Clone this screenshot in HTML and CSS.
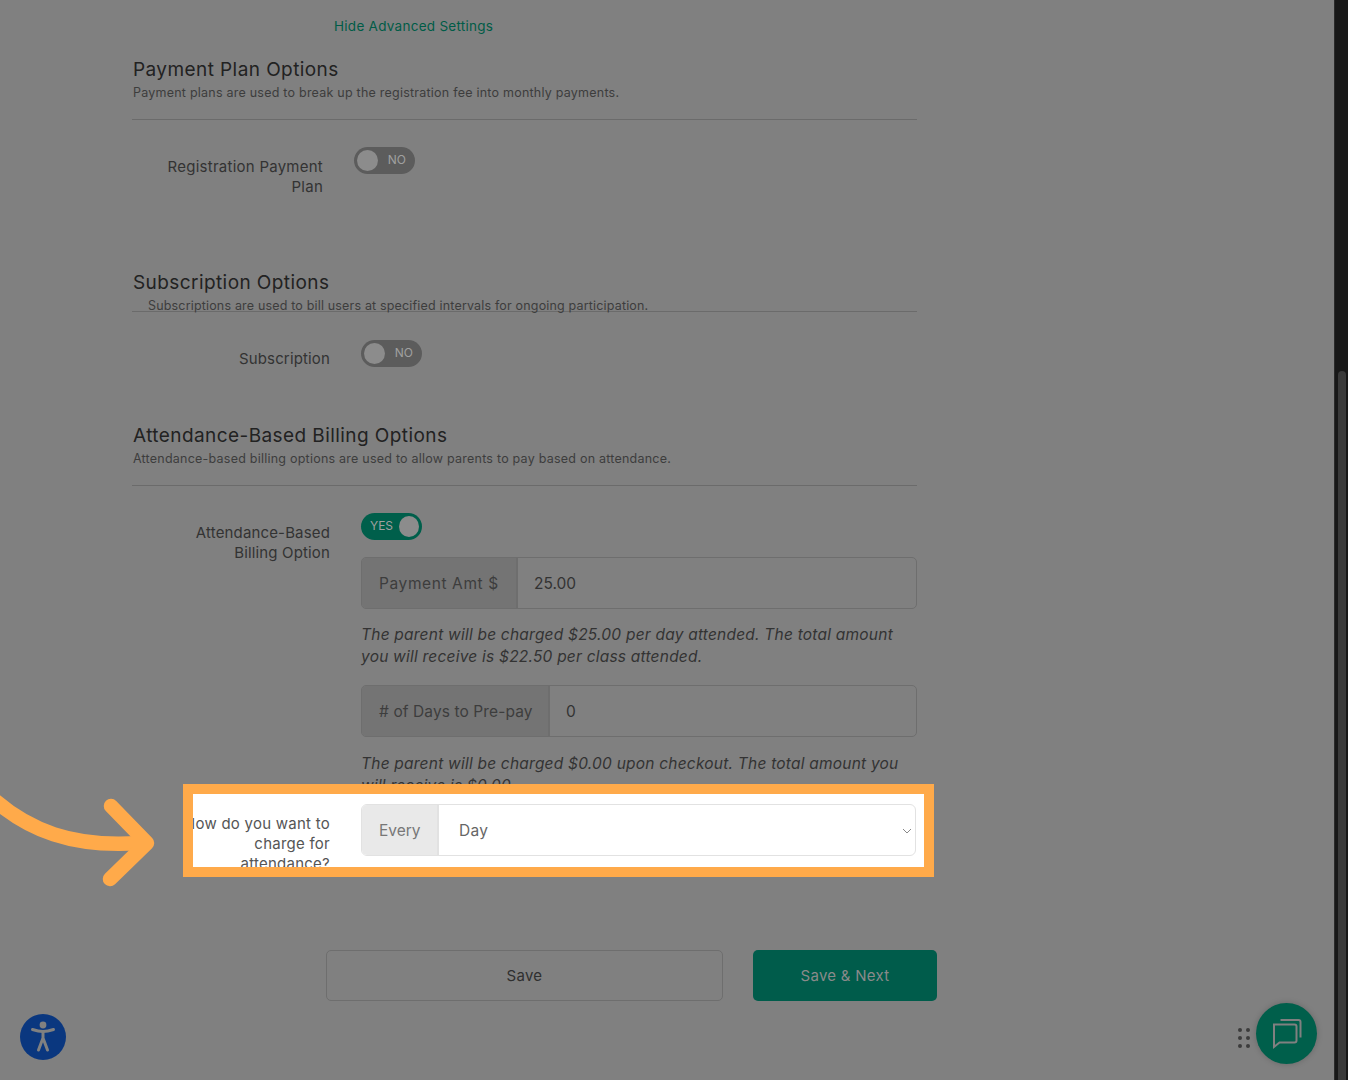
FILE: index.html
```html
<!DOCTYPE html>
<html lang="en">
<head>
    <meta charset="UTF-8">
    <meta name="viewport" content="width=device-width, initial-scale=1.0">
    <title>Registration Settings</title>
    <link rel="stylesheet" href="styles.css">
</head>
<body>
    <div class="screen">
        <main class="page">
            <a class="advanced-link" href="#">Hide Advanced Settings</a>

            <section class="first-section">
                <div class="section-head">
                    <h3>Payment Plan Options</h3>
                    <p class="section-desc">Payment plans are used to break up the registration fee into monthly payments.</p>
                </div>
                <div class="row row-shifted">
                    <label class="row-label">Registration Payment Plan</label>
                    <div class="row-control">
                        <span class="toggle"><span class="knob"></span><span class="toggle-text">NO</span></span>
                    </div>
                </div>
            </section>

            <section class="subscription-section">
                <div class="section-head section-head-tight">
                    <h3>Subscription Options</h3>
                    <p class="section-desc section-desc-indent">Subscriptions are used to bill users at specified intervals for ongoing participation.</p>
                </div>
                <div class="row row-subscription">
                    <label class="row-label">Subscription</label>
                    <div class="row-control">
                        <span class="toggle"><span class="knob"></span><span class="toggle-text">NO</span></span>
                    </div>
                </div>
            </section>

            <section class="attendance-section">
                <div class="section-head">
                    <h3>Attendance-Based Billing Options</h3>
                    <p class="section-desc">Attendance-based billing options are used to allow parents to pay based on attendance.</p>
                </div>
                <div class="row row-attendance">
                    <label class="row-label">Attendance-Based Billing Option</label>
                    <div class="row-control">
                        <span class="toggle toggle-on"><span class="toggle-text">YES</span><span class="knob"></span></span>
                        <div class="input-group">
                            <span class="addon">Payment Amt $</span>
                            <span class="input-value">25.00</span>
                        </div>
                        <p class="hint">The parent will be charged $25.00 per day attended. The total amount you will receive is $22.50 per class attended.</p>
                        <div class="input-group input-group-days">
                            <span class="addon"># of Days to Pre-pay</span>
                            <span class="input-value">0</span>
                        </div>
                        <p class="hint hint-days">The parent will be charged $0.00 upon checkout. The total amount you will receive is $0.00</p>
                    </div>
                </div>
            </section>

            <div class="actions">
                <button class="btn btn-save">Save</button>
                <button class="btn btn-next">Save &amp; Next</button>
            </div>

            <!-- tutorial callout, sits over the form -->
            <svg class="callout-arrow" width="160" height="100" viewBox="0 0 160 100">
                <path d="M-8 8 C 28 40, 72 58, 140 53" />
                <path d="M111 16 L147 53 L110 89" />
            </svg>
            <div class="spotlight">
                <div class="row row-spotlight">
                    <label class="row-label">How do you want to charge for attendance?</label>
                    <div class="row-control">
                        <div class="input-group input-group-light">
                            <span class="addon">Every</span>
                            <span class="input-value">Day</span>
                            <svg class="chevron" width="10" height="6" viewBox="0 0 10 6"><path d="M1 1 L5 5 L9 1" /></svg>
                        </div>
                    </div>
                </div>
            </div>

            <div class="a11y-btn">
                <svg width="46" height="46" viewBox="0 0 46 46">
                    <circle cx="23" cy="11" r="3.4" />
                    <path d="M12.5 15.5 C 17 17, 20 17.5, 23 17.5 C 26 17.5, 29 17, 33.5 15.5" />
                    <path d="M23 17.5 V 25 M23 24 L 18.5 36 M23 24 L 27.5 36" />
                </svg>
            </div>

            <div class="chat-handle">
                <i></i><i></i><i></i><i></i><i></i><i></i>
            </div>
            <div class="chat-btn">
                <svg width="61" height="61" viewBox="0 0 61 61">
                    <path d="M18 21.500 H38.500 A2 2 0 0 1 40.500 23.500 V37.500 A2 2 0 0 1 38.500 39.500 H23.500 L18 44 Z" />
                    <path d="M24.500 17 H42.500 A2 2 0 0 1 44.500 19 V34.500" />
                </svg>
            </div>
        </main>
        <div class="scrollbar"><div class="scroll-thumb"></div></div>
    </div>
</body>
</html>
```

FILE: styles.css
```css
* {
    box-sizing: border-box;
}
body {
    margin: 0;
    font-family: Inter, "Liberation Sans", sans-serif;
    background-color: #808080;
    color: #333;
}
.screen {
    display: flex;
    height: 1080px;
    overflow: hidden;
}
.page {
    position: relative;
    flex: 1;
    padding: 16px 0 0 132px;
}
.scrollbar {
    width: 14px;
    background: #181818;
    border-left: 1px solid #2b2b2b;
    padding: 371px 2px 0 3px;
}
.scroll-thumb {
    height: 100%;
    background: #3a3a3a;
    border-radius: 4px 4px 0 0;
}
.advanced-link {
    display: block;
    margin-left: 202px;
    font-size: 13.5px;
    letter-spacing: 0.27px;
    line-height: 20px;
    color: #005c47;
    text-decoration: none;
}
section {
    width: 784.5px;
}
.first-section {
    margin-top: 22px;
}
.subscription-section {
    margin-top: 74px;
}
.attendance-section {
    margin-top: 55px;
}
.section-head {
    padding-bottom: 17px;
    border-bottom: 1px solid #6b6b6b;
}
.section-head-tight {
    padding-bottom: 0;
}
h3 {
    margin: 0 0 0 1px;
    font-size: 19px;
    font-weight: 400;
    letter-spacing: 0.42px;
    line-height: 24px;
    color: #222;
}
.section-desc {
    margin: 2px 0 0 1px;
    font-size: 12.5px;
    letter-spacing: 0.23px;
    line-height: 18px;
    color: #3d3d3d;
}
.section-desc-indent {
    height: 14px;
    margin: 2px 0 0 16px;
    letter-spacing: 0.17px;
}
.row {
    display: flex;
    gap: 31px;
    margin-top: 28px;
}
.row-shifted {
    margin-top: 27px;
    margin-left: -7px;
}
.row-attendance {
    margin-top: 27px;
}
.row-label {
    flex: none;
    width: 198px;
    padding: 10px 0 0 30px;
    font-size: 15px;
    letter-spacing: 0.15px;
    line-height: 20px;
    text-align: right;
    color: #333;
}
.row-shifted .row-label {
    letter-spacing: 0.25px;
}
.row-subscription .row-label {
    padding-top: 9px;
}
.row-attendance .row-label {
    padding-top: 10px;
}
.row-control {
    flex: 1;
}
.toggle {
    display: flex;
    align-items: center;
    justify-content: space-between;
    width: 61px;
    height: 27px;
    padding: 0 3px;
    border-radius: 14px;
    background: #5c5c5c;
}
.toggle-on {
    background: #005f4b;
}
.knob {
    width: 21px;
    height: 21px;
    border-radius: 50%;
    background: #8c8c8c;
}
.toggle-text {
    padding: 0 6px 2px;
    font-size: 12px;
    color: #a0a0a0;
}
.input-group {
    display: flex;
    align-items: stretch;
    height: 52px;
    margin-top: 17px;
    border: 1px solid #6e6e6e;
    border-radius: 5px;
    font-size: 15.5px;
}
.input-group-days {
    margin-top: 17px;
}
.addon {
    display: flex;
    align-items: center;
    width: 156px;
    padding-left: 17px;
    background: #747474;
    border-right: 2px solid #6e6e6e;
    border-radius: 4px 0 0 4px;
    letter-spacing: 0.6px;
    color: #3d3d3d;
}
.input-group-days .addon {
    width: 188px;
    letter-spacing: 0.1px;
}
.input-value {
    display: flex;
    align-items: center;
    padding-left: 16px;
    color: #333;
}
.hint {
    margin: 15px 0 0;
    font-size: 15.5px;
    font-style: italic;
    letter-spacing: 0.22px;
    line-height: 22px;
    color: #333;
}
.hint-days {
    margin-top: 16px;
}
.actions {
    display: flex;
    gap: 30px;
    margin: 153px 0 0 194px;
}
.btn {
    height: 51px;
    border-radius: 5px;
    font-family: inherit;
    font-size: 15px;
    letter-spacing: 0.27px;
}
.btn-save {
    width: 397px;
    border: 1px solid #6e6e6e;
    background: transparent;
    color: #2f2f2f;
}
.btn-next {
    width: 184px;
    border: none;
    background: #005c4b;
    color: #8a8a8a;
}
.spotlight {
    position: absolute;
    left: 183px;
    top: 784px;
    width: 751px;
    height: 93px;
    overflow: hidden;
    border: 10px solid #ffaa4a;
    background: #fff;
}
.row-spotlight {
    margin: 0;
    padding-top: 10px;
}
.row-spotlight .row-label {
    width: 167px;
    margin-left: -30px;
    padding: 10px 0 0;
    letter-spacing: 0.25px;
    color: #555;
}
.input-group-light {
    position: relative;
    margin-top: 0;
    margin-right: 8px;
    border-color: #e2e2e2;
    border-radius: 6px;
}
.input-group-light .addon {
    width: 77px;
    background: #e9e9e9;
    border-color: #e2e2e2;
    border-radius: 5px 0 0 5px;
    letter-spacing: 0;
    color: #777;
}
.input-group-light .input-value {
    padding-left: 20px;
    letter-spacing: 0.3px;
    color: #666;
}
.chevron {
    position: absolute;
    right: 3px;
    top: 23px;
}
.chevron path {
    fill: none;
    stroke: #888;
    stroke-width: 1;
}
.callout-arrow {
    position: absolute;
    left: 0;
    top: 790px;
    overflow: visible;
}
.callout-arrow path {
    fill: none;
    stroke: #ffaa4a;
    stroke-width: 14.5;
    stroke-linecap: round;
    stroke-linejoin: round;
}
.a11y-btn {
    position: absolute;
    left: 20px;
    top: 1014px;
    width: 46px;
    height: 46px;
    border-radius: 50%;
    background: #0a377f;
}
.a11y-btn circle {
    fill: #808080;
}
.a11y-btn path {
    fill: none;
    stroke: #808080;
    stroke-width: 3;
    stroke-linecap: round;
}
.chat-handle {
    position: absolute;
    left: 1238px;
    top: 1028px;
    display: grid;
    grid-template-columns: 4px 4px;
    gap: 4px;
}
.chat-handle i {
    width: 4px;
    height: 4px;
    border-radius: 50%;
    background: #3c3c3c;
}
.chat-btn {
    position: absolute;
    left: 1256px;
    top: 1003px;
    width: 61px;
    height: 61px;
    border-radius: 50%;
    background: #005f4b;
    box-shadow: 0 0 6px rgba(0, 0, 0, 0.2);
}
.chat-btn path {
    fill: none;
    stroke: #808080;
    stroke-width: 2;
}
```
